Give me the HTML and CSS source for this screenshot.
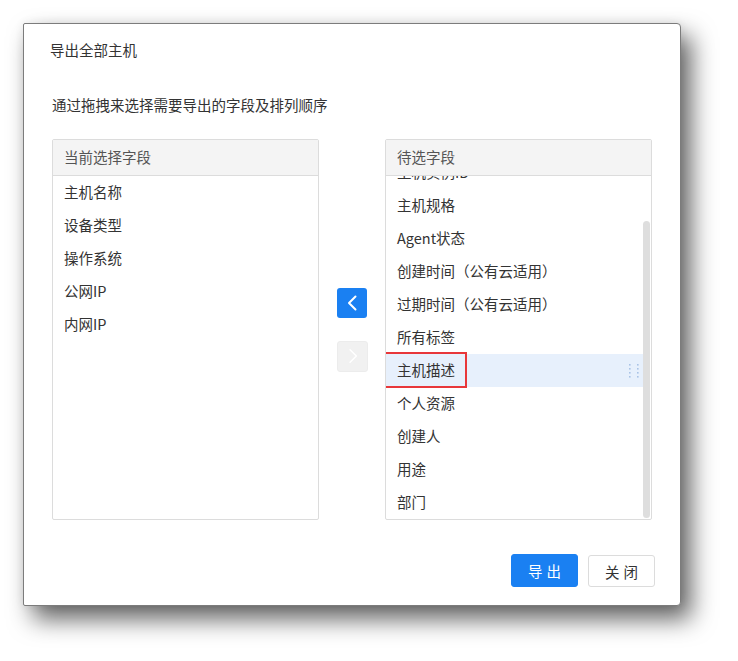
FILE: index.html
```html
<!DOCTYPE html>
<html lang="zh-CN">
<head>
<meta charset="utf-8">
<title>导出全部主机</title>
<link rel="stylesheet" href="styles.css">
</head>
<body>
<div class="stage">
  <div class="dialog">
    <div class="title">导出全部主机</div>
    <div class="hint">通过拖拽来选择需要导出的字段及排列顺序</div>
    <div class="transfer">
      <div class="panel">
        <div class="panel-head">当前选择字段</div>
        <div class="list">
          <div class="item">主机名称</div>
          <div class="item">设备类型</div>
          <div class="item">操作系统</div>
          <div class="item">公网IP</div>
          <div class="item">内网IP</div>
        </div>
      </div>
      <div class="arrows">
        <button class="arrow arrow-active" type="button">
          <svg width="30" height="30" viewBox="0 0 30 30"><polyline points="18.5,8.5 12,15 18.5,21.5" fill="none" stroke="#fff" stroke-width="2" stroke-linecap="round" stroke-linejoin="round"/></svg>
        </button>
        <button class="arrow arrow-disabled" type="button">
          <svg width="30" height="30" viewBox="0 0 30 30"><polyline points="12.5,8.5 19,15 12.5,21.5" fill="none" stroke="#fff" stroke-width="1.6" stroke-linecap="round" stroke-linejoin="round"/></svg>
        </button>
      </div>
      <div class="panel">
        <div class="panel-head">待选字段</div>
        <div class="scroll-area">
          <div class="list list-clip" id="candidates">
            <div class="item">主机ID</div>
            <div class="item">主机实例ID</div>
            <div class="item">主机规格</div>
            <div class="item">Agent状态</div>
            <div class="item">创建时间（公有云适用）</div>
            <div class="item">过期时间（公有云适用）</div>
            <div class="item">所有标签</div>
            <div class="item item-hover">主机描述
              <span class="mark"></span>
              <svg class="handle" width="10" height="14" viewBox="0 0 10 14"><g fill="#a9c3e6"><rect x="0" y="0" width="1.6" height="1.6"/><rect x="8" y="0" width="1.6" height="1.6"/><rect x="0" y="4" width="1.6" height="1.6"/><rect x="8" y="4" width="1.6" height="1.6"/><rect x="0" y="8" width="1.6" height="1.6"/><rect x="8" y="8" width="1.6" height="1.6"/><rect x="0" y="12" width="1.6" height="1.6"/><rect x="8" y="12" width="1.6" height="1.6"/></g></svg>
            </div>
            <div class="item">个人资源</div>
            <div class="item">创建人</div>
            <div class="item">用途</div>
            <div class="item">部门</div>
          </div>
          <div class="scrollbar"><div class="thumb"></div></div>
        </div>
      </div>
    </div>
    <div class="footer">
      <button class="btn btn-primary" type="button">导出</button>
      <button class="btn btn-default" type="button">关闭</button>
    </div>
  </div>
</div>
<script src="script.js"></script>
</body>
</html>
```
FILE: styles.css
```css
html, body {
  margin: 0;
  padding: 0;
  background: #fff;
}
body {
  font-family: "Noto Sans CJK SC", "Open Sans", sans-serif;
  color: #333;
}
.stage {
  box-sizing: border-box;
  height: 661px;
  padding: 23px 0 0 23px;
}
.dialog {
  box-sizing: border-box;
  width: 658px;
  height: 583px;
  background: #fff;
  border: 1px solid #7c7c7c;
  border-radius: 2px 4px 4px 2px;
  box-shadow: 10px 13px 24px rgba(0, 0, 0, 0.62), 0 0 10px rgba(0, 0, 0, 0.07);
  display: flex;
  flex-direction: column;
}
.title {
  font-size: 14.5px;
  line-height: 20px;
  padding: 16px 0 0 26px;
  color: #333;
}
.hint {
  font-size: 14.5px;
  line-height: 20px;
  padding: 35px 0 0 28px;
  color: #333;
}
.transfer {
  display: flex;
  padding: 24px 0 0 28px;
}
.panel {
  box-sizing: border-box;
  width: 267px;
  height: 381px;
  border: 1px solid #dcdcdc;
  border-radius: 2px;
  display: flex;
  flex-direction: column;
}
.panel-head {
  height: 35px;
  line-height: 34px;
  background: #f4f4f4;
  border-bottom: 1px solid #dcdcdc;
  padding-left: 11px;
  font-size: 14.5px;
  color: #555;
}
.list {
  height: 343px;
}
.scroll-area {
  display: flex;
  height: 343px;
}
.list-clip {
  flex: 1;
  overflow: hidden;
}
.scrollbar {
  width: 8px;
  flex: none;
  padding-top: 45px;
  box-sizing: border-box;
}
.thumb {
  width: 7px;
  height: 297px;
  background: #dedede;
  border-radius: 4px;
}
.item {
  position: relative;
  height: 33px;
  line-height: 31px;
  padding-left: 11px;
  font-size: 14.5px;
  color: #333;
}
.item-hover {
  background: #e7f0fc;
}
.mark {
  position: absolute;
  left: -5px;
  top: -2px;
  width: 82px;
  height: 32px;
  border: 2px solid #e8373a;
}
.handle {
  position: absolute;
  right: 4px;
  top: 10px;
}
.arrows {
  width: 66px;
  display: flex;
  flex-direction: column;
  align-items: center;
  justify-content: center;
  gap: 23px;
}
.arrow {
  width: 30px;
  height: 30px;
  padding: 0;
  border: none;
  border-radius: 3px;
  display: flex;
  align-items: center;
  justify-content: center;
}
.arrow-active {
  background: #1a80f2;
}
.arrow-disabled {
  width: 31px;
  height: 31px;
  background: #f1f1f1;
  border: 1px solid #ececec;
}
.footer {
  display: flex;
  justify-content: flex-end;
  gap: 10px;
  padding: 34px 25px 0 0;
}
.btn {
  box-sizing: border-box;
  width: 67px;
  height: 33px;
  border-radius: 3px;
  font-family: "Noto Sans CJK SC", "Open Sans", sans-serif;
  font-size: 14.5px;
  letter-spacing: 4px;
  padding: 0 0 0 4px;
  cursor: pointer;
}
.btn-primary {
  background: #1a80f2;
  border: 1px solid #1a80f2;
  color: #fff;
}
.btn-default {
  background: #fff;
  border: 1px solid #dcdcdc;
  color: #333;
  margin-top: 1px;
  height: 32px;
}
```
FILE: script.js
```js
var list = document.getElementById('candidates');
list.scrollTop = list.scrollHeight;
```
